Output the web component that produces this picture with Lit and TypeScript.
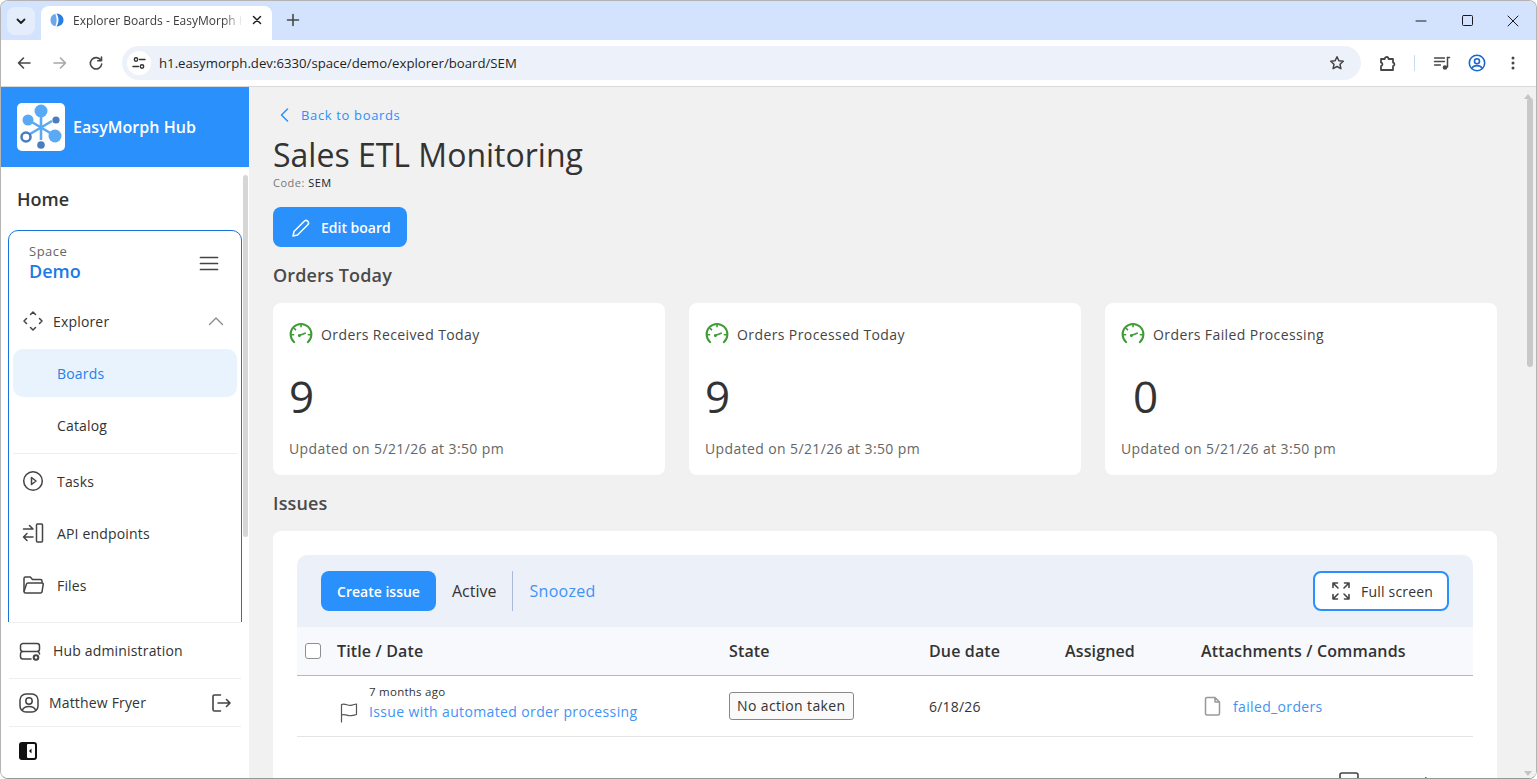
import { LitElement, html, css, svg } from 'lit';
import { customElement } from 'lit/decorators.js';

const ic = (size: number, body: unknown, box = 24, stroke = 'currentColor', sw = 1.6) => html`
  <svg width=${size} height=${size} viewBox="0 0 ${box} ${box}" fill="none" stroke=${stroke}
    stroke-width=${sw} stroke-linecap="round" stroke-linejoin="round">${body}</svg>`;

const gauge = ic(26, svg`
  <path d="M6.2 20.2A10.4 10.4 0 1 1 19.8 20.2" stroke-width="2"/>
  <path d="M13 2.6v2.2M3.6 12.8h2M20.4 12.8h2M6.2 6.4l1.4 1.4" stroke-width="1.6"/>
  <path d="M11.2 13.6l6-2.4" stroke-width="1.6"/>
  <circle cx="11.4" cy="13.4" r="1.5" fill="#3f9c35" stroke="none"/>`, 26, '#3f9c35');

@customElement('app-root')
export class AppRoot extends LitElement {
  static styles = css`
    :host {
      display: block;
      width: 1537px;
      height: 779px;
      overflow: hidden;
      font-family: 'Open Sans', sans-serif;
      color: #333;
    }
    .window {
      height: 777px;
      border: 1px solid #b4b4b4;
      border-bottom-color: #989898;
      border-radius: 8px;
      overflow: hidden;
      display: flex;
      flex-direction: column;
      background: #fff;
    }
    .tabstrip {
      height: 39px;
      flex: none;
      background: #d3e3fd;
      display: flex;
      align-items: flex-end;
      padding-left: 6px;
    }
    .tab-menu {
      width: 28px;
      height: 28px;
      margin-bottom: 5px;
      border-radius: 8px;
      background: #e4edfb;
      display: flex;
      align-items: center;
      justify-content: center;
      color: #1f1f1f;
    }
    .tab {
      width: 231px;
      height: 34px;
      margin-left: 6px;
      background: #fff;
      border-radius: 8px 8px 0 0;
      display: flex;
      align-items: center;
      padding: 0 0 6px 9px;
      box-sizing: border-box;
      font-size: 12px;
      color: #3c3c3c;
    }
    .tab-title {
      width: 170px;
      margin-left: 9px;
      white-space: nowrap;
      overflow: hidden;
      -webkit-mask-image: linear-gradient(90deg, #000 150px, transparent 170px);
      mask-image: linear-gradient(90deg, #000 150px, transparent 170px);
    }
    .tab-close {
      display: flex;
      margin-left: 6px;
      color: #1f1f1f;
    }
    .tab-new {
      display: flex;
      margin: 0 0 12px 13px;
      color: #474747;
    }
    .controls {
      margin-left: auto;
      display: flex;
      align-self: flex-start;
      color: #1a1a1a;
    }
    .controls span {
      width: 46px;
      height: 39px;
      display: flex;
      align-items: center;
      justify-content: center;
    }
    .toolbar {
      height: 46px;
      flex: none;
      border-bottom: 1px solid #dadada;
      display: flex;
      align-items: center;
      padding-left: 11px;
      color: #474747;
    }
    .nav {
      width: 24px;
      display: flex;
      justify-content: center;
      margin-right: 12px;
    }
    .nav.off {
      color: #a8a8a8;
    }
    .omni {
      width: 1239px;
      height: 34px;
      margin-left: 2px;
      border-radius: 17px;
      background: #edf2fa;
      display: flex;
      align-items: center;
      padding: 0 12px 0 5px;
      box-sizing: border-box;
      font-size: 13.2px;
      color: #1f1f1f;
    }
    .site {
      width: 24px;
      height: 24px;
      border-radius: 50%;
      background: #fff;
      display: flex;
      align-items: center;
      justify-content: center;
      margin-right: 8px;
      color: #333;
    }
    .url {
      flex: 1;
    }
    .star {
      display: flex;
      margin-right: 4px;
    }
    .tools {
      display: flex;
      align-items: center;
      margin-left: 17px;
    }
    .tools span {
      display: flex;
    }
    .tsep {
      width: 1px;
      height: 16px;
      background: #c7d9f7;
      margin: 0 18px 0 16px;
    }
    .body {
      flex: 1;
      min-height: 0;
      display: flex;
    }
    .side {
      width: 248px;
      flex: none;
      display: flex;
      flex-direction: column;
      background: #fff;
    }
    .brand {
      height: 80px;
      flex: none;
      background: #2a90fb;
      display: flex;
      align-items: center;
      padding-left: 16px;
      color: #fff;
      font-size: 16px;
      font-weight: 600;
      letter-spacing: 0.05px;
    }
    .logo {
      width: 48px;
      height: 48px;
      background: #fff;
      border-radius: 5px;
      margin-right: 8px;
      display: flex;
    }
    .side-scroll {
      flex: 1;
      min-height: 0;
      position: relative;
      overflow: hidden;
    }
    .side-thumb {
      position: absolute;
      right: 1px;
      top: 8px;
      width: 5px;
      height: 362px;
      background: #d6d6d6;
      border-radius: 3px;
    }
    .home {
      height: 63px;
      padding-left: 16px;
      display: flex;
      align-items: center;
      font-size: 18px;
      font-weight: 600;
      color: #333;
    }
    .space {
      margin-left: 7px;
      width: 234px;
      box-sizing: border-box;
      height: 420px;
      border: 1px solid #1a73d9;
      border-radius: 10px 10px 0 0;
      padding: 0 4px;
    }
    .space-head {
      height: 64px;
      padding: 12px 18px 0 16px;
      box-sizing: border-box;
      display: flex;
      justify-content: space-between;
      align-items: flex-start;
    }
    .space-label {
      font-size: 13px;
      line-height: 16px;
      letter-spacing: 0.5px;
      color: #666;
    }
    .space-name {
      font-size: 18px;
      line-height: 24px;
      font-weight: 600;
      color: #1b7ae6;
    }
    .burger {
      display: flex;
      color: #444;
      margin: 11px 0 0 0;
    }
    .item {
      height: 52px;
      display: flex;
      align-items: center;
      font-size: 14px;
      letter-spacing: 0.17px;
      color: #333;
      padding-left: 9px;
    }
    .item svg {
      flex: none;
      color: #444;
    }
    .item .label {
      margin-left: 13px;
      flex: 1;
    }
    .item .label.tight {
      margin-left: 9px;
    }
    .chev {
      display: flex;
      margin-right: 12px;
    }
    .item .chev svg {
      color: #888;
    }
    .sub {
      height: 52px;
      display: flex;
      align-items: center;
      font-size: 14px;
      letter-spacing: 0.17px;
      padding-left: 44px;
      color: #333;
    }
    .sub.active {
      height: 48px;
      margin: 2px 0;
      border-radius: 10px;
      background: #e8f3fe;
      color: #2a7fe8;
      font-weight: 500;
    }
    .sub.last {
      margin-bottom: 2px;
    }
    .rule {
      height: 1px;
      background: #eee;
      margin-bottom: 1px;
    }
    .foot {
      flex: none;
      margin: 0 0 4px 8px;
      width: 232px;
    }
    .foot-row {
      display: flex;
      align-items: center;
      border-top: 1px solid #eee;
      font-size: 14px;
      letter-spacing: 0.17px;
      padding-left: 10px;
      color: #333;
    }
    .foot-row svg {
      flex: none;
      color: #444;
    }
    .foot-row.admin {
      height: 55px;
    }
    .foot-row.admin span {
      margin-left: 12px;
    }
    .foot-row.user {
      height: 47px;
    }
    .foot-row.user span {
      margin-left: 10px;
      flex: 1;
    }
    .foot-row.user svg:last-child {
      margin-right: 9px;
    }
    .foot-row.collapse {
      height: 47px;
    }
    .main {
      flex: 1;
      min-width: 0;
      display: flex;
      background: #f1f1f1;
      position: relative;
    }
    .page {
      flex: 1;
      min-width: 0;
      overflow: hidden;
      padding: 0 39px 0 24px;
    }
    .back {
      height: 30px;
      margin-top: 13px;
      display: flex;
      align-items: center;
      font-size: 13px;
      letter-spacing: 0.65px;
      color: #2a90fb;
    }
    .back svg {
      margin: 0 8px 0 4px;
    }
    h1 {
      margin: 4px 0 0;
      font-size: 32px;
      line-height: 42px;
      font-weight: 400;
      color: #333;
    }
    .code {
      font-size: 11px;
      line-height: 14px;
      letter-spacing: 0.5px;
      color: #777;
    }
    .code b {
      font-weight: 400;
      color: #222;
    }
    .edit {
      width: 134px;
      height: 40px;
      margin-top: 17px;
      border-radius: 8px;
      background: #2a90fb;
      color: #fff;
      display: flex;
      align-items: center;
      padding-left: 17px;
      box-sizing: border-box;
      font-size: 14px;
      font-weight: 600;
    }
    .edit svg {
      margin-right: 9px;
    }
    h2 {
      margin: 0;
      font-size: 18px;
      line-height: 24px;
      font-weight: 600;
      letter-spacing: 0.15px;
      color: #4a4a4a;
    }
    .h-orders {
      margin-top: 16px;
    }
    .cards {
      display: grid;
      grid-template-columns: repeat(3, 1fr);
      gap: 24px;
      margin-top: 16px;
    }
    .card {
      height: 172px;
      background: #fff;
      border-radius: 8px;
      padding: 19px 16px 0;
      box-sizing: border-box;
    }
    .card-title {
      display: flex;
      align-items: center;
      gap: 7px;
      font-size: 14px;
      line-height: 26px;
      letter-spacing: 0.4px;
      color: #444;
    }
    .card-title svg {
      margin-left: -1px;
    }
    .card-value {
      font-size: 44px;
      line-height: 60px;
      margin-top: 18px;
      color: #333;
    }
    .card-value.zero {
      padding-left: 12px;
    }
    .card-date {
      font-size: 14px;
      line-height: 20px;
      letter-spacing: 0.38px;
      color: #666;
      margin-top: 13px;
    }
    .h-issues {
      margin-top: 16px;
    }
    .panel {
      background: #fff;
      border-radius: 8px;
      margin-top: 16px;
      padding: 24px 24px 0;
      height: 300px;
      box-sizing: border-box;
    }
    .bar {
      height: 72px;
      background: #ecf0f8;
      border-radius: 10px 10px 0 0;
      display: flex;
      align-items: center;
      padding: 0 24px;
    }
    .create {
      width: 115px;
      height: 40px;
      border-radius: 8px;
      background: #2a90fb;
      color: #fff;
      font-size: 14px;
      font-weight: 600;
      display: flex;
      align-items: center;
      justify-content: center;
    }
    .tab-active {
      font-size: 16px;
      margin-left: 16px;
      color: #333;
    }
    .bar-sep {
      width: 1px;
      height: 40px;
      background: #a9bad6;
      margin: 0 17px 0 15px;
    }
    .tab-link {
      font-size: 16px;
      letter-spacing: 0.3px;
      color: #3f93f5;
    }
    .full {
      margin-left: auto;
      width: 136px;
      height: 40px;
      box-sizing: border-box;
      border: 2px solid #2a90fb;
      border-radius: 8px;
      background: #fff;
      display: flex;
      align-items: center;
      padding-left: 16px;
      font-size: 14px;
      letter-spacing: 0.2px;
      color: #333;
    }
    .full svg {
      margin-right: 10px;
      color: #444;
    }
    .grid {
      display: grid;
      grid-template-columns: 40px 392px 200px 136px 136px 1fr;
      align-items: center;
    }
    .thead {
      height: 49px;
      background: #f7f9fc;
      border-bottom: 1px solid #a9bad6;
      font-size: 16px;
      font-weight: 600;
      letter-spacing: 0.14px;
      color: #333;
      box-sizing: border-box;
    }
    .check {
      width: 16px;
      height: 16px;
      margin-left: 8px;
      border: 1.5px solid #8f8f8f;
      border-radius: 3px;
      box-sizing: border-box;
      background: #fff;
    }
    .trow {
      height: 61px;
      border-bottom: 1px solid #e4e4e4;
      box-sizing: border-box;
      font-size: 14px;
      letter-spacing: 0.2px;
    }
    .title-cell {
      display: flex;
      align-items: flex-end;
      margin: -4px 0 0 1px;
    }
    .title-cell svg {
      margin: 0 9px 1px 0;
      color: #555;
      flex: none;
    }
    .ago {
      font-size: 11.5px;
      line-height: 16px;
      letter-spacing: 0.25px;
      color: #333;
    }
    .issue-link {
      font-size: 14px;
      line-height: 24px;
      letter-spacing: 0.37px;
      color: #3f93f5;
    }
    .state {
      display: inline-block;
      border: 1px solid #888;
      border-radius: 3px;
      background: #fafafa;
      padding: 0 7px;
      font-size: 14px;
      line-height: 26px;
      letter-spacing: 0.38px;
      color: #333;
    }
    .att {
      display: flex;
      align-items: center;
      gap: 10px;
      color: #3f93f5;
      letter-spacing: 0.35px;
    }
    .att svg {
      color: #999;
      margin-left: 2px;
    }
    .archive {
      display: flex;
      justify-content: flex-end;
      align-items: center;
      gap: 10px;
      margin-top: 35px;
      padding-right: 22px;
      font-size: 14px;
      color: #333;
    }
    .archive svg {
      color: #444;
    }
    .vbar {
      position: absolute;
      top: 0;
      right: 0;
      bottom: 0;
      width: 12px;
      background: #f1f1f1;
    }
    .up,
    .down {
      position: absolute;
      right: 4px;
      width: 0;
      height: 0;
      border-left: 4px solid transparent;
      border-right: 4px solid transparent;
    }
    .up {
      top: 7px;
      border-bottom: 5px solid #c4c4c4;
    }
    .down {
      bottom: 2px;
      border-top: 5px solid #c4c4c4;
    }
    .thumb {
      position: absolute;
      top: 11px;
      right: 3px;
      width: 6px;
      height: 269px;
      border-radius: 3px;
      background: #c8c8c8;
    }
  `;

  render() {
    return html`
      <div class="window">
        <div class="tabstrip">
          <div class="tab-menu">${ic(14, svg`<path d="M3.5 5.5L7 9l3.5-3.5"/>`, 14, 'currentColor', 1.8)}</div>
          <div class="tab">
            <svg width="14" height="14" viewBox="0 0 14 14">
              <path d="M5.2.7C2 1.5.5 4 .5 7s1.5 5.5 4.7 6.3C6.3 11 6.6 9 6.6 7S6.3 3 5.2.7z" fill="#6fa8ea"/>
              <path d="M6.5.5C11 1 13.5 3.5 13.5 7S11 13 6.5 13.500C8 11 8.5 9 8.5 7S8 3 6.5.5z" fill="#2a7de1"/>
            </svg>
            <span class="tab-title">Explorer Boards - EasyMorph Hub</span>
            <span class="tab-close">${ic(16, svg`<path d="M4.5 4.5l7 7M11.5 4.5l-7 7"/>`, 16, 'currentColor', 1.5)}</span>
          </div>
          <span class="tab-new">${ic(16, svg`<path d="M8 2.5v11M2.5 8h11"/>`, 16, 'currentColor', 1.6)}</span>
          <div class="controls">
            <span>${ic(12, svg`<path d="M1 6h10"/>`, 12, 'currentColor', 1)}</span>
            <span>${ic(12, svg`<rect x="1.5" y=".5" width="10" height="10" rx="1"/>`, 12, 'currentColor', 1)}</span>
            <span>${ic(12, svg`<path d="M1 1l10 10M11 1L1 11"/>`, 12, 'currentColor', 1)}</span>
          </div>
        </div>
        <div class="toolbar">
          <span class="nav">${ic(16, svg`<path d="M14 8H2.5M7.5 3L2.5 8l5 5"/>`, 16, 'currentColor', 1.6)}</span>
          <span class="nav off">${ic(16, svg`<path d="M2 8h11.5M8.5 3l5 5-5 5"/>`, 16, 'currentColor', 1.6)}</span>
          <span class="nav">${ic(16, svg`<path d="M13 5.5A5.7 5.7 0 1 0 13.7 9M13.5 2v3.8H9.7"/>`, 16, 'currentColor', 1.6)}</span>
          <div class="omni">
            <span class="site">${ic(16, svg`<circle cx="5" cy="4.5" r="1.7"/><path d="M8.5 4.5H14M2 11.5h5.5"/><circle cx="11" cy="11.5" r="1.7"/>`, 16, 'currentColor', 1.4)}</span>
            <span class="url">h1.easymorph.dev:6330/space/demo/explorer/board/SEM</span>
            <span class="star">${ic(16, svg`<path d="M8 1.8l1.9 4 4.4.5-3.3 3 .9 4.4L8 11.5l-3.900 2.200.9-4.400-3.300-3 4.400-.5z"/>`, 16, '#444', 1.5)}</span>
          </div>
          <div class="tools">
            <span>${ic(20, svg`<path d="M3 6h3.700a2 2 0 0 1 3.600-1.200 2 2 0 0 1 .2 1.200H15v3.500a1.900 1.900 0 0 1 0 3.700V17H3v-3.800a1.900 1.900 0 0 0 0-3.700z"/>`, 20, '#474747', 1.8)}</span>
            <span class="tsep"></span>
            <span>${ic(18, svg`<path d="M1.5 4h10M1.5 7.5h10M1.5 11h6" stroke-width="1.3"/><path d="M14.5 3.5v9.5" stroke-width="1.5"/><path d="M14.5 3.5h2" stroke-width="1.5"/><circle cx="12" cy="13.5" r="2.3" fill="#474747" stroke="none"/>`, 18, '#474747')}</span>
            <span style="margin-left: 16px">${ic(20, svg`<circle cx="10" cy="10" r="7.7"/><circle cx="10" cy="8.2" r="2.5"/><path d="M4.8 15.2c1.200-2 3-2.600 5.200-2.600s4 .6 5.200 2.600"/>`, 20, '#1a66d0', 1.6)}</span>
            <span style="margin-left: 18px">
              <svg width="16" height="16" viewBox="0 0 16 16" fill="#474747">
                <circle cx="8" cy="3" r="1.500"/><circle cx="8" cy="8" r="1.500"/><circle cx="8" cy="13" r="1.500"/>
              </svg>
            </span>
          </div>
        </div>
        <div class="body">
          <aside class="side">
            <div class="brand">
              <span class="logo">
                <svg width="48" height="48" viewBox="0 0 48 48" fill="none">
                  <path d="M24 13v24M13 18l22 13M35 18L13 31" stroke="#5aa9f5" stroke-width="2.6"/>
                  <circle cx="24" cy="8" r="6.5" fill="#5aa9f5"/>
                  <circle cx="11" cy="17" r="5.5" fill="#5aa9f5"/>
                  <circle cx="39" cy="17" r="3.6" fill="#4a7cc0"/>
                  <circle cx="38" cy="33" r="6.5" fill="#5aa9f5"/>
                  <circle cx="9" cy="34" r="4.5" fill="none" stroke="#4a7cc0" stroke-width="2.6"/>
                  <circle cx="24" cy="42" r="3.8" fill="#4a7cc0"/>
                </svg>
              </span>
              EasyMorph Hub
            </div>
            <div class="side-scroll">
              <div class="home">Home</div>
              <div class="space">
                <div class="space-head">
                  <div>
                    <div class="space-label">Space</div>
                    <div class="space-name">Demo</div>
                  </div>
                  <span class="burger">${ic(20, svg`<path d="M1.5 3.500h17M1.5 9.500h17M1.5 15.500h17"/>`, 20, 'currentColor', 1.7)}</span>
                </div>
                <div class="item">
                  ${ic(22, svg`<path d="M8.5 4.5L11 2l2.5 2.5M8.5 17.5L11 20l2.5-2.5M4.5 8.5L2 11l2.5 2.5M17.5 8.5L20 11l-2.5 2.5"/>`, 22, 'currentColor', 1.5)}
                  <span class="label tight">Explorer</span>
                  <span class="chev">${ic(18, svg`<path d="M2.5 12.5L9 6l6.5 6.5"/>`, 18, 'currentColor', 1.3)}</span>
                </div>
                <div class="sub active">Boards</div>
                <div class="sub last">Catalog</div>
                <div class="rule"></div>
                <div class="item">
                  ${ic(22, svg`<circle cx="11" cy="11" r="9.3"/><path d="M9.5 7.5l4.5 3.5-4.5 3.5z"/>`, 22, 'currentColor', 1.5)}
                  <span class="label">Tasks</span>
                </div>
                <div class="item">
                  ${ic(22, svg`<path d="M1.5 7h9M7.5 3.5L11 7M11 15H2M5 11.5L1.5 15l3.5 3.5"/><rect x="14.5" y="2" width="6" height="18" rx="1"/>`, 22, 'currentColor', 1.5)}
                  <span class="label">API endpoints</span>
                </div>
                <div class="item">
                  ${ic(22, svg`<path d="M2 17V4.5A1.5 1.5 0 0 1 3.5 3h4.800l2.200 2.500h8A1.500 1.500 0 0 1 20 7v1.500"/><path d="M2 17.500l2.500-7.500a1.500 1.500 0 0 1 1.400-1h14.300a1 1 0 0 1 1 1.300L20 18a1.500 1.500 0 0 1-1.400 1H3.500A1.500 1.500 0 0 1 2 17.500z"/>`, 22, 'currentColor', 1.5)}
                  <span class="label">Files</span>
                </div>
              </div>
              <div class="side-thumb"></div>
            </div>
            <div class="foot">
              <div class="foot-row admin">
                ${ic(22, svg`<path d="M12 19H4a2.500 2.500 0 0 1-2.500-2.500v-2.500A2.500 2.500 0 0 1 4 11.500h14a2.500 2.500 0 0 1 2.500 2v.5M4 11.500A2.500 2.500 0 0 1 1.500 9V6A2.500 2.500 0 0 1 4 3.500h14A2.500 2.500 0 0 1 20.500 6v3a2.500 2.500 0 0 1-2.500 2.500"/><circle cx="17" cy="17.500" r="2.300" stroke-width="2"/>`, 22, 'currentColor', 1.5)}
                <span>Hub administration</span>
              </div>
              <div class="foot-row user">
                ${ic(20, svg`<rect x="1" y="1" width="18" height="18" rx="6"/><circle cx="10" cy="8" r="3.2"/><path d="M3.5 17c1-2.600 3.400-3.500 6.500-3.500s5.500.9 6.500 3.500"/>`, 20, 'currentColor', 1.5)}
                <span>Matthew Fryer</span>
                ${ic(22, svg`<path d="M10.5 3H4.500A1.500 1.500 0 0 0 3 4.500v13A1.500 1.500 0 0 0 4.500 19h6M8 11h12M16.500 7.500L20 11l-3.500 3.500"/>`, 22, 'currentColor', 1.6)}
              </div>
              <div class="foot-row collapse">
                <svg width="18" height="18" viewBox="0 0 18 18">
                  <rect width="18" height="18" rx="3" fill="#111"/>
                  <rect x="8" y="2" width="8" height="14" rx="1" fill="#fff"/>
                  <path d="M12.5 6.5L10 9l2.500 2.500z" fill="#111"/>
                </svg>
              </div>
            </div>
          </aside>
          <main class="main">
            <div class="page">
              <div class="back">
                ${ic(16, svg`<path d="M10.5 2L4.500 8l6 6"/>`, 16, 'currentColor', 1.5)}
                Back to boards
              </div>
              <h1>Sales ETL Monitoring</h1>
              <div class="code">Code: <b>SEM</b></div>
              <div class="edit">
                ${ic(22, svg`<path d="M4 15.5L14.500 5a2.500 2.500 0 0 1 3.500 3.500L7.500 19 3 20z"/>`, 22, 'currentColor', 1.5)}
                Edit board
              </div>
              <h2 class="h-orders">Orders Today</h2>
              <div class="cards">
                ${[['Orders Received Today', '9', ''], ['Orders Processed Today', '9', ''], ['Orders Failed Processing', '0', 'zero']].map(
                  ([title, value, cls]) => html`
                    <div class="card">
                      <div class="card-title">${gauge}${title}</div>
                      <div class="card-value ${cls}">${value}</div>
                      <div class="card-date">Updated on 5/21/26 at 3:50 pm</div>
                    </div>`,
                )}
              </div>
              <h2 class="h-issues">Issues</h2>
              <div class="panel">
                <div class="bar">
                  <div class="create">Create issue</div>
                  <span class="tab-active">Active</span>
                  <span class="bar-sep"></span>
                  <span class="tab-link">Snoozed</span>
                  <div class="full">
                    ${ic(20, svg`<path d="M2 2l5 5M18 2l-5 5M2 18l5-5M18 18l-5-5M2 6.5V2h4.500M13.500 2H18v4.500M2 13.500V18h4.500M18 13.500V18h-4.500"/>`, 20, 'currentColor', 1.6)}
                    Full screen
                  </div>
                </div>
                <div class="grid thead">
                  <span class="check"></span>
                  <span>Title / Date</span>
                  <span>State</span>
                  <span>Due date</span>
                  <span>Assigned</span>
                  <span>Attachments / Commands</span>
                </div>
                <div class="grid trow">
                  <span></span>
                  <div class="title-cell">
                    ${ic(22, svg`<path d="M3.5 21V3.500c4-1.500 6 1.500 9.500.8 2-.4 4-.8 5.500-1.300v10.500c-2 .8-4 1-5.500 1.200-3.500.5-5.500-2-9.500-.7"/>`, 22, 'currentColor', 1.2)}
                    <div>
                      <div class="ago">7 months ago</div>
                      <div class="issue-link">Issue with automated order processing</div>
                    </div>
                  </div>
                  <span><span class="state">No action taken</span></span>
                  <span>6/18/26</span>
                  <span></span>
                  <span class="att">
                    ${ic(20, svg`<path d="M4 1.5h8l4.500 4.500v11.500a1.500 1.500 0 0 1-1.500 1.500H4a1.500 1.500 0 0 1-1.500-1.500V3A1.500 1.500 0 0 1 4 1.500zM12 1.500V6h4.500"/>`, 20, 'currentColor', 1.5)}
                    failed_orders
                  </span>
                </div>
                <div class="archive">
                  ${ic(20, svg`<rect x="1" y="1" width="18" height="6" rx="2"/><path d="M2.5 7v10h15V7"/>`, 20, 'currentColor', 1.6)}
                  View Archive
                </div>
              </div>
            </div>
            <div class="vbar">
              <span class="up"></span>
              <span class="thumb"></span>
              <span class="down"></span>
            </div>
          </main>
        </div>
      </div>
    `;
  }
}
